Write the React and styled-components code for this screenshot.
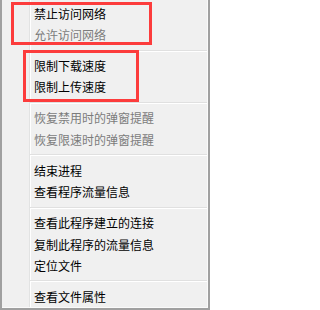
import styled, { createGlobalStyle } from 'styled-components';

const GlobalStyle = createGlobalStyle`
  html, body {
    margin: 0;
    padding: 0;
    background: #ffffff;
  }
  body {
    font-family: "Noto Sans CJK SC", "Noto Sans", sans-serif;
  }
`;

const Frame = styled.div`
  position: relative;
  width: 210px;
  height: 310px;
`;

// classic menu: grey frame, light inner edge, icon gutter line at the left
const Menu = styled.div`
  box-sizing: border-box;
  width: 210px;
  height: 310px;
  padding: 3px 1px 0 0;
  border: 2px solid #a0a0a0;
  border-top: none;
  box-shadow: inset -1px -1px 0 #fafafa;
  background: linear-gradient(
    to right,
    #f0f0f0 27px,
    #e2e3e3 27px 28px,
    #ffffff 28px 29px,
    #f0f0f0 29px
  );
  display: flex;
  flex-direction: column;
`;

const Item = styled.div`
  height: 21.4px;
  display: flex;
  align-items: center;
  padding-left: 32px;
  font-size: 12px;
  line-height: 1;
  white-space: nowrap;
  color: ${(p) => (p.disabled ? '#7c7c7c' : '#000000')};
`;

const Separator = styled.div`
  height: 9.6px;
  display: flex;
  flex-direction: column;
  justify-content: center;
  padding-left: 28px;

  &::before {
    content: '';
    display: block;
    height: 1px;
    background: #e0e0e0;
  }
  &::after {
    content: '';
    display: block;
    height: 1px;
    background: #ffffff;
  }
`;

const Highlight = styled.div`
  position: absolute;
  box-sizing: border-box;
  top: ${(p) => p.$top}px;
  left: ${(p) => p.$left}px;
  width: ${(p) => p.$width}px;
  height: ${(p) => p.$height}px;
  border: 3px solid #fc3c3c;
  pointer-events: none;
`;

const groups = [
  [
    { label: '禁止访问网络' },
    { label: '允许访问网络', disabled: true },
  ],
  [{ label: '限制下载速度' }, { label: '限制上传速度' }],
  [
    { label: '恢复禁用时的弹窗提醒', disabled: true },
    { label: '恢复限速时的弹窗提醒', disabled: true },
  ],
  [{ label: '结束进程' }, { label: '查看程序流量信息' }],
  [
    { label: '查看此程序建立的连接' },
    { label: '复制此程序的流量信息' },
    { label: '定位文件' },
  ],
  [{ label: '查看文件属性' }],
];

const App = () => {
  return (
    <>
      <GlobalStyle />
      <Frame>
        <Menu>
          {groups.map((group, gi) => (
            <div key={gi}>
              {gi > 0 && <Separator />}
              {group.map((item) => (
                <Item key={item.label} disabled={item.disabled}>
                  {item.label}
                </Item>
              ))}
            </div>
          ))}
        </Menu>
        <Highlight $top={2} $left={11} $width={141} $height={43} />
        <Highlight $top={50} $left={23} $width={116} $height={52} />
      </Frame>
    </>
  );
};

export default App;
